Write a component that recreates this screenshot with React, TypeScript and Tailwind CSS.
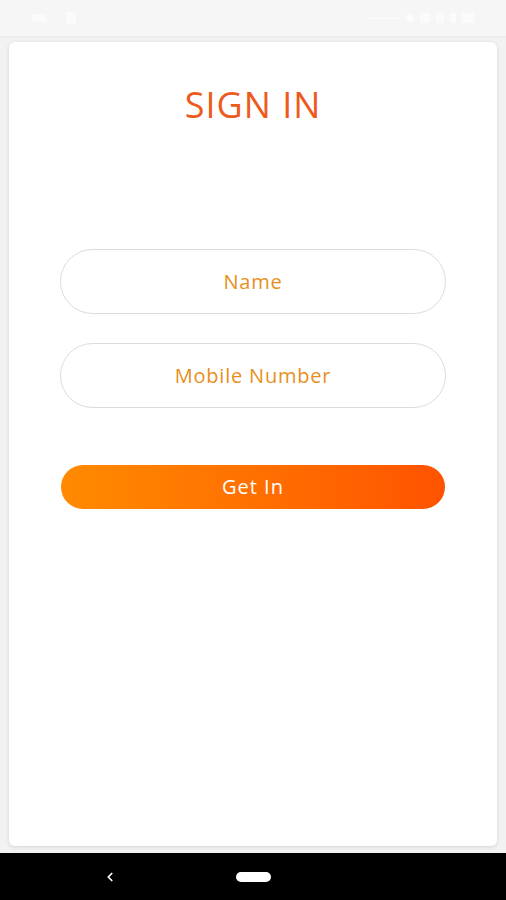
import { ChevronLeft } from "lucide-react";

function StatusBar() {
  return (
    <div className="flex h-[36px] items-center justify-between bg-[#f6f6f6] px-[32px] shadow-[0_1px_2px_rgba(0,0,0,0.05)]">
      <div className="flex items-center gap-[20px]">
        <span className="h-[8px] w-[14px] rounded-[1px] bg-[#fbfbfb]" />
        <span className="h-[12px] w-[10px] rounded-[1px] bg-[#fbfbfb]" />
      </div>
      <div className="flex items-center gap-[6px]">
        <span className="h-[2px] w-[30px] bg-[#fbfbfb]" />
        <span className="h-[8px] w-[8px] rounded-full bg-[#fbfbfb]" />
        <span className="h-[10px] w-[10px] bg-[#fbfbfb]" />
        <span className="h-[10px] w-[8px] bg-[#fbfbfb]" />
        <span className="h-[10px] w-[6px] bg-[#fbfbfb]" />
        <span className="h-[10px] w-[12px] bg-[#fbfbfb]" />
      </div>
    </div>
  );
}

function PillInput({ placeholder }: { placeholder: string }) {
  return (
    <input
      type="text"
      placeholder={placeholder}
      className="h-[65px] w-full rounded-full border border-[#dcdcdc] bg-white text-center text-[20px] tracking-[0.8px] text-[#e8901c] outline-none placeholder:text-[#e8901c]"
    />
  );
}

export default function App() {
  return (
    <div
      className="flex h-[900px] w-[506px] flex-col bg-[#f2f2f2]"
      style={{ fontFamily: "'Open Sans', 'Noto Sans', sans-serif" }}
    >
      <StatusBar />

      <div className="flex-1 px-[9px] pb-[7px] pt-[6px]">
        <div className="flex h-full flex-col items-center rounded-[6px] bg-white shadow-[0_1px_4px_rgba(0,0,0,0.12)]">
          <h1 className="mt-[38px] text-[36px] leading-[50px] font-normal tracking-[1px] text-[#ec5a1c]">
            SIGN IN
          </h1>

          <div className="mt-[119px] flex w-[386px] flex-col gap-[29px]">
            <PillInput placeholder="Name" />
            <PillInput placeholder="Mobile Number" />
          </div>

          <button
            type="button"
            className="mt-[57px] h-[44px] w-[384px] rounded-full bg-gradient-to-r from-[#ff8a00] to-[#ff5200] text-[20px] tracking-[1px] text-white"
          >
            Get In
          </button>
        </div>
      </div>

      <div className="relative flex h-[47px] items-center bg-black">
        <ChevronLeft className="absolute left-[103px] top-[17px] size-[14px] text-white" strokeWidth={3} />
        <span className="absolute left-[236px] top-[19px] h-[10px] w-[35px] rounded-full bg-white" />
      </div>
    </div>
  );
}
